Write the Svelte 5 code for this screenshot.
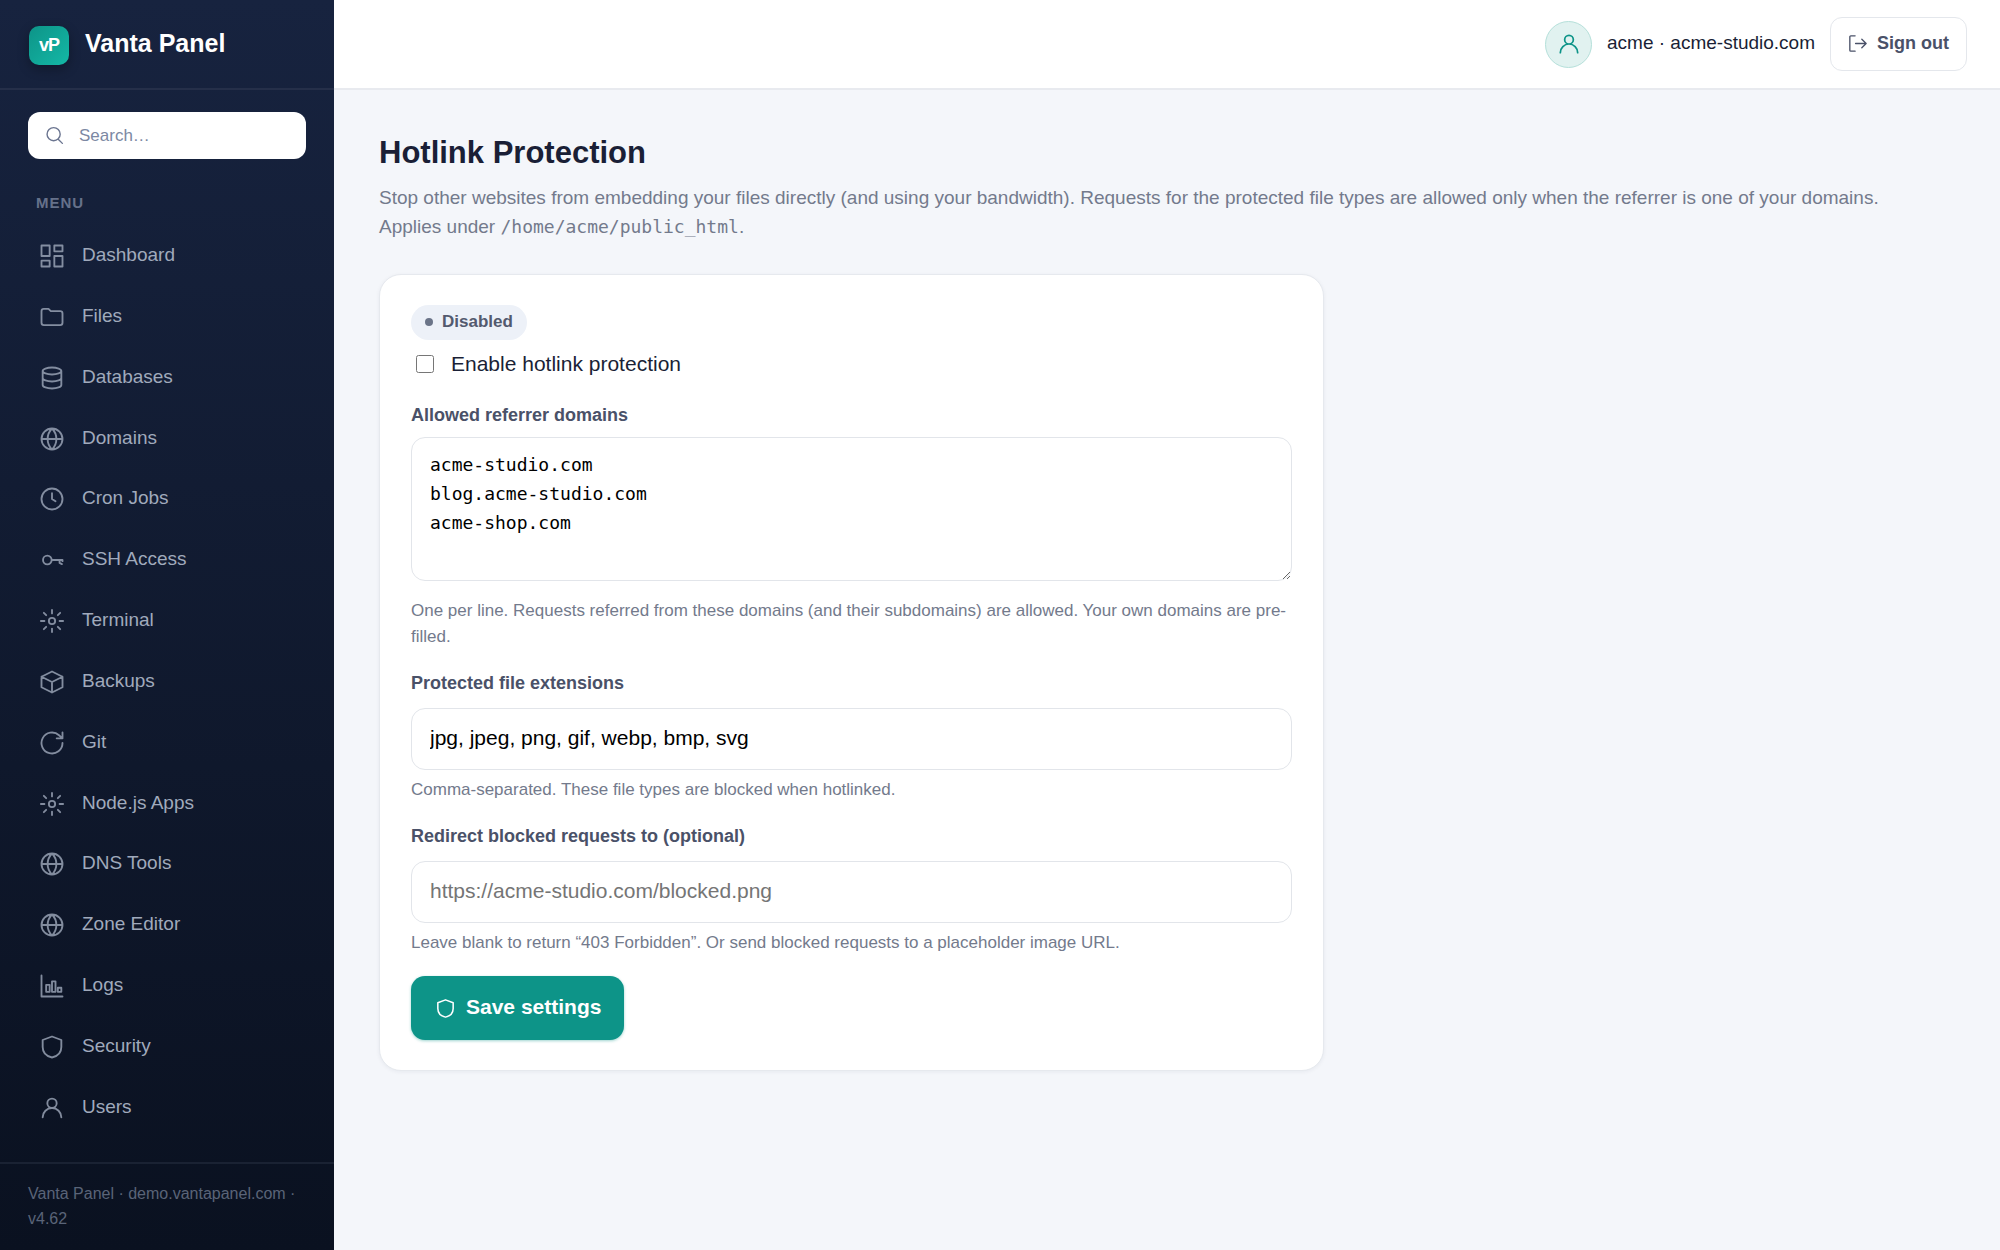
<script lang="ts">
  type IconName = keyof typeof icons;

  // 24x24 stroke icons
  const icons = {
    grid: 'M3 3h7v9H3zM14 3h7v5h-7zM14 12h7v9h-7zM3 16h7v5H3z',
    folder: 'M3 7a2 2 0 0 1 2-2h4l2 2h8a2 2 0 0 1 2 2v8a2 2 0 0 1-2 2H5a2 2 0 0 1-2-2z',
    database: 'M4 6a8 3 0 1 0 16 0a8 3 0 1 0-16 0M4 6v12c0 1.7 3.6 3 8 3s8-1.3 8-3V6M4 12c0 1.7 3.6 3 8 3s8-1.3 8-3',
    globe: 'M12 3a9 9 0 1 0 0 18a9 9 0 1 0 0-18M3 12h18M12 3c-5 5-5 13 0 18c5-5 5-13 0-18',
    clock: 'M12 3a9 9 0 1 0 0 18a9 9 0 1 0 0-18M12 7v5l3 2',
    key: 'M8 8.3a3.7 3.7 0 1 0 0 7.4a3.7 3.7 0 1 0 0-7.4M11.7 12H21v1M18.5 12v2.5l2 1',
    gear: 'M12 9.3a2.7 2.7 0 1 0 0 5.4a2.7 2.7 0 1 0 0-5.4M12 2.5v3M12 18.5v3M2.5 12h3M18.5 12h3M5 5l2 2M17 17l2 2M5 19l2-2M17 7l2-2',
    box: 'M12 3l9 4.5v9L12 21l-9-4.5v-9zM3 7.5l9 4.5l9-4.5M12 12v9',
    refresh: 'M21 12a9 9 0 1 1-3-6.7L21 8M21 3v5h-5',
    chart: 'M3 3v18h18M7 11h3v6H7zM12 8h3v9h-3zM17 13.5h3V17h-3z',
    shield: 'M12 3l8 3v6c0 5-3.5 8-8 9c-4.5-1-8-4-8-9V6z',
    user: 'M12 4a4 4 0 1 0 0 8a4 4 0 1 0 0-8M4 20a8 8 0 0 1 16 0',
    search: 'M11 3a7.5 7.5 0 1 0 0 15a7.5 7.5 0 1 0 0-15M16.5 16.5L21 21',
    logout: 'M9.5 4H5a1 1 0 0 0-1 1v14a1 1 0 0 0 1 1h4.5M10 12h11M16.5 7.5L21 12l-4.5 4.5'
  };

  const menu: { label: string; icon: IconName }[] = [
    { label: 'Dashboard', icon: 'grid' },
    { label: 'Files', icon: 'folder' },
    { label: 'Databases', icon: 'database' },
    { label: 'Domains', icon: 'globe' },
    { label: 'Cron Jobs', icon: 'clock' },
    { label: 'SSH Access', icon: 'key' },
    { label: 'Terminal', icon: 'gear' },
    { label: 'Backups', icon: 'box' },
    { label: 'Git', icon: 'refresh' },
    { label: 'Node.js Apps', icon: 'gear' },
    { label: 'DNS Tools', icon: 'globe' },
    { label: 'Zone Editor', icon: 'globe' },
    { label: 'Logs', icon: 'chart' },
    { label: 'Security', icon: 'shield' },
    { label: 'Users', icon: 'user' }
  ];

  let query = $state('');
  let enabled = $state(false);
  let domains = $state('acme-studio.com\nblog.acme-studio.com\nacme-shop.com');
  let extensions = $state('jpg, jpeg, png, gif, webp, bmp, svg');
  let redirect = $state('');
</script>

{#snippet icon(name: IconName)}
  <svg class="icon" viewBox="0 0 24 24" aria-hidden="true"><path d={icons[name]} /></svg>
{/snippet}

<div class="shell">
  <aside class="sidebar">
    <div class="brand">
      <span class="logo">vP</span>
      <span class="brand-name">Vanta Panel</span>
    </div>

    <label class="search">
      {@render icon('search')}
      <input type="search" placeholder="Search…" aria-label="Search" bind:value={query} />
    </label>

    <div class="menu-title">MENU</div>
    <nav>
      {#each menu as item}
        <a href="#{item.label}">{@render icon(item.icon)}<span>{item.label}</span></a>
      {/each}
    </nav>

    <div class="version">Vanta Panel · demo.vantapanel.com · v4.62</div>
  </aside>

  <div class="main">
    <header class="topbar">
      <span class="avatar">{@render icon('user')}</span>
      <span class="account">acme · acme-studio.com</span>
      <button class="signout" type="button">{@render icon('logout')}Sign out</button>
    </header>

    <main class="content">
      <h1>Hotlink Protection</h1>
      <p class="lead">
        Stop other websites from embedding your files directly (and using your bandwidth). Requests for the
        protected file types are allowed only when the referrer is one of your domains. Applies under
        <code>/home/acme/public_html</code>.
      </p>

      <form class="card" onsubmit={(e) => e.preventDefault()}>
        <span class="badge">Disabled</span>

        <label class="toggle">
          <input type="checkbox" bind:checked={enabled} />
          Enable hotlink protection
        </label>

        <div class="field">
          <label for="domains">Allowed referrer domains</label>
          <textarea id="domains" rows="4" spellcheck="false" bind:value={domains}></textarea>
          <p class="hint">
            One per line. Requests referred from these domains (and their subdomains) are allowed. Your own
            domains are pre-filled.
          </p>
        </div>

        <div class="field">
          <label for="extensions">Protected file extensions</label>
          <input id="extensions" type="text" spellcheck="false" bind:value={extensions} />
          <p class="hint">Comma-separated. These file types are blocked when hotlinked.</p>
        </div>

        <div class="field">
          <label for="redirect">Redirect blocked requests to (optional)</label>
          <input id="redirect" type="text" placeholder="https://acme-studio.com/blocked.png" bind:value={redirect} />
          <p class="hint">Leave blank to return “403 Forbidden”. Or send blocked requests to a placeholder image URL.</p>
        </div>

        <button class="save" type="submit">{@render icon('shield')}<span>Save settings</span></button>
      </form>
    </main>
  </div>
</div>

<style>
  :global(body) {
    margin: 0;
    background: #f4f6fa;
    color: #1a1f36;
    font-family: "Liberation Sans", Arial, sans-serif;
  }
  .shell,
  .shell * {
    box-sizing: border-box;
  }
  .shell {
    display: flex;
    min-height: 100vh;
  }
  input,
  textarea,
  button {
    font-family: inherit;
  }
  .icon {
    width: 23px;
    height: 23px;
    flex-shrink: 0;
    fill: none;
    stroke: currentColor;
    stroke-width: 1.6;
    stroke-linecap: round;
    stroke-linejoin: round;
  }

  /* Sidebar */
  .sidebar {
    display: flex;
    flex-direction: column;
    flex-shrink: 0;
    width: 334px;
    background: linear-gradient(180deg, #17233f 0%, #0a1120 100%);
    color: #a0aabc;
  }
  .brand {
    display: flex;
    align-items: center;
    gap: 16px;
    height: 90px;
    padding: 2px 29px 0;
    border-bottom: 2px solid #252f49;
  }
  .logo {
    display: grid;
    place-items: center;
    width: 40px;
    height: 39px;
    border-radius: 10px;
    background: linear-gradient(135deg, #0d9488, #14b8a6);
    box-shadow: 0 4px 12px rgba(0, 0, 0, 0.3);
    color: #fff;
    font-size: 18px;
    font-weight: 700;
    letter-spacing: -1px;
  }
  .brand-name {
    padding-bottom: 3px;
    color: #fff;
    font-size: 25px;
    font-weight: 700;
  }
  .search {
    display: flex;
    align-items: center;
    gap: 14px;
    height: 47px;
    margin: 22px 28px 0;
    padding: 0 16px;
    border-radius: 12px;
    background: #fff;
    color: #6b7590;
  }
  .search .icon {
    width: 21px;
    height: 21px;
  }
  .search input {
    flex: 1;
    min-width: 0;
    padding: 0;
    border: 0;
    outline: 0;
    background: none;
    font-size: 17px;
  }
  .search input::placeholder {
    color: #7c88a3;
  }
  .menu-title {
    padding: 34px 36px 14px;
    color: #66718a;
    font-size: 15px;
    line-height: 20px;
    font-weight: 700;
    letter-spacing: 1px;
  }
  nav {
    display: flex;
    flex: 1;
    flex-direction: column;
    justify-content: space-between;
    padding: 0 17px 25px 16px;
  }
  nav a {
    display: flex;
    align-items: center;
    gap: 16px;
    padding: 14px 22px;
    border-radius: 12px;
    color: inherit;
    font-size: 19px;
    line-height: 28px;
    text-decoration: none;
  }
  nav span,
  .save span {
    padding-bottom: 2px;
  }
  nav .icon {
    width: 28px;
    height: 28px;
    opacity: 0.8;
  }
  .version {
    padding: 17px 28px 19px;
    border-top: 2px solid #1a2233;
    color: #5a6478;
    font-size: 16px;
    line-height: 25px;
  }

  /* Top bar */
  .main {
    flex: 1;
    min-width: 0;
  }
  .topbar {
    display: flex;
    align-items: center;
    justify-content: flex-end;
    gap: 15px;
    height: 90px;
    padding: 0 33px;
    border-bottom: 2px solid #e8eaef;
    background: #fff;
  }
  .avatar {
    display: grid;
    place-items: center;
    width: 47px;
    height: 47px;
    border: 1px solid #b5e0da;
    border-radius: 50%;
    background: #e1f2f0;
    color: #0d9488;
  }
  .avatar .icon {
    width: 26px;
    height: 26px;
  }
  .account {
    padding-bottom: 2px;
    font-size: 19px;
  }
  .signout {
    display: flex;
    align-items: center;
    gap: 8px;
    height: 54px;
    padding: 0 17px 1px 15px;
    border: 1px solid #e4e7ec;
    border-radius: 12px;
    background: #fff;
    color: #4a5168;
    font-size: 18px;
    font-weight: 700;
  }
  .signout .icon {
    stroke-width: 1.4;
  }

  /* Page */
  .content {
    padding: 41px 45px;
  }
  h1 {
    margin: 0;
    font-size: 31px;
    line-height: 44px;
  }
  .lead {
    max-width: 1550px;
    margin: 8px 0 33px;
    color: #737a8c;
    font-size: 19px;
    line-height: 29px;
  }
  code {
    font-family: "DejaVu Sans Mono", monospace;
    font-size: 18px;
  }
  .card {
    max-width: 945px;
    padding: 30px 31px;
    border: 1px solid #e6e9ee;
    border-radius: 22px;
    background: #fff;
    box-shadow: 0 1px 4px rgba(20, 30, 60, 0.06);
  }
  .badge {
    display: flex;
    align-items: center;
    gap: 9px;
    width: fit-content;
    height: 35px;
    padding: 0 14px 1px;
    border-radius: 18px;
    background: #edf1f8;
    color: #535a6e;
    font-size: 17px;
    font-weight: 700;
  }
  .badge::before {
    content: '';
    width: 8px;
    height: 8px;
    border-radius: 50%;
    background: #6b7488;
  }
  .toggle {
    display: flex;
    align-items: center;
    gap: 17px;
    padding: 8px 5px 23px;
    font-size: 21px;
    line-height: 31px;
  }
  .toggle input {
    width: 18px;
    height: 18px;
    margin: 0;
  }
  .field {
    display: flex;
    flex-direction: column;
    margin-bottom: 20px;
  }
  .field label {
    margin-bottom: 8px;
    color: #4a5168;
    font-size: 18px;
    line-height: 27px;
    font-weight: 700;
  }
  .field input,
  .field textarea {
    width: 100%;
    padding: 12px 18px 14px;
    border: 1px solid #e2e5ea;
    border-radius: 14px;
    background: #fff;
    color: #000;
  }
  .field input {
    height: 62px;
    margin-top: 3px;
    font-size: 21px;
  }
  .field textarea {
    height: 144px;
    margin-bottom: 10px;
    font-family: "DejaVu Sans Mono", monospace;
    font-size: 18px;
    line-height: 29px;
    resize: vertical;
  }
  .field input::placeholder {
    color: #757575;
  }
  .hint {
    margin: 7px 0 0;
    color: #737a8c;
    font-size: 17px;
    line-height: 26px;
  }
  .save {
    display: flex;
    align-items: center;
    gap: 9px;
    height: 64px;
    padding: 0 23px;
    border: 0;
    border-radius: 14px;
    background: #0d9488;
    box-shadow: 0 1px 3px rgba(13, 148, 136, 0.4);
    color: #fff;
    font-size: 21px;
    font-weight: 700;
  }
</style>
